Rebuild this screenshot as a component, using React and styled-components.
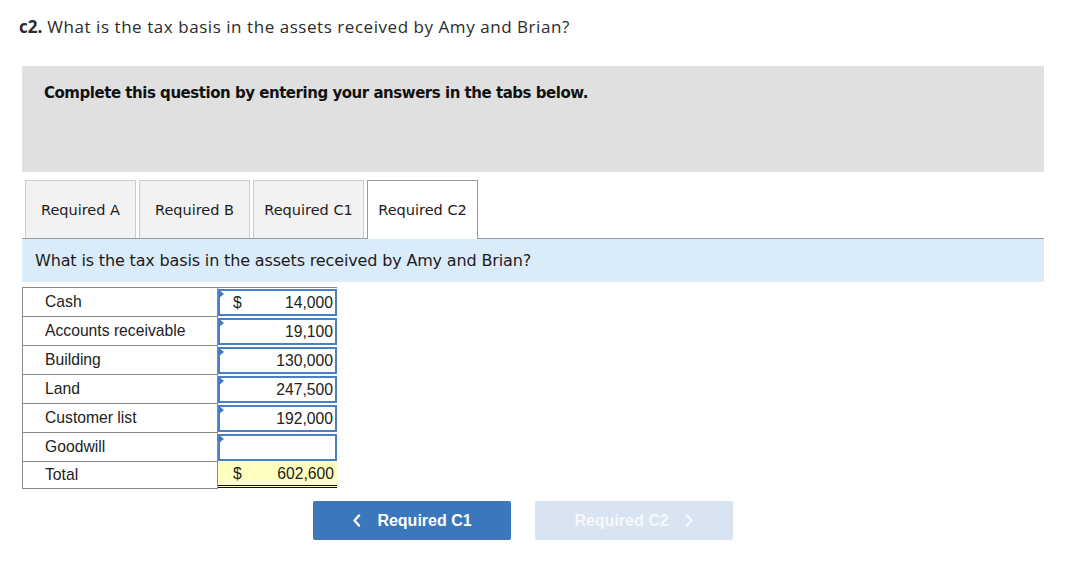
import React from "react";
import styled, { createGlobalStyle, css } from "styled-components";

const GlobalStyle = createGlobalStyle`
  html, body {
    margin: 0;
    padding: 0;
    background: #ffffff;
  }
`;

const Page = styled.div`
  width: 1078px;
  height: 574px;
  box-sizing: border-box;
  padding: 15px 34px 0 22px;
  font-family: "Liberation Sans", Arial, sans-serif;
  color: #222;
`;

const Heading = styled.h2`
  margin: 0 0 0 -3px;
  font-family: "Open Sans", Lato, sans-serif;
  font-weight: 400;
  font-size: 17px;
  letter-spacing: 0.55px;
  line-height: 24px;
  color: #2b2b2b;

  b {
    font-weight: 700;
    letter-spacing: 0;
  }
`;

const Instructions = styled.div`
  margin-top: 27px;
  height: 106px;
  box-sizing: border-box;
  background: #e0e0e0;
  padding: 18px 22px;
  font-family: Verdana, "DejaVu Sans", sans-serif;
  font-weight: 700;
  font-size: 15px;
  color: #111;
  letter-spacing: -0.47px;
`;

const TabBar = styled.div`
  margin-top: 8px;
  display: flex;
  gap: 3px;
  padding-left: 3px;
  border-bottom: 1px solid #9a9a9a;
  height: 58px;
  align-items: flex-end;
`;

const Tab = styled.div`
  width: 109px;
  height: 57px;
  display: flex;
  align-items: center;
  justify-content: center;
  font-family: Verdana, "DejaVu Sans", sans-serif;
  font-size: 14.5px;
  color: #1c1c1c;
  background: #f2f2f2;
  border: 1px solid #cccccc;
  border-bottom: none;
  box-sizing: content-box;

  ${(p) =>
    p.$active &&
    css`
      background: #ffffff;
      border-color: #9a9a9a;
      height: 58px;
      margin-bottom: -1px;
      position: relative;
    `}
`;

const QuestionBand = styled.div`
  height: 43px;
  background: #daebf9;
  display: flex;
  align-items: center;
  padding-left: 13px;
  font-family: Verdana, "DejaVu Sans", sans-serif;
  font-size: 16px;
  letter-spacing: -0.15px;
  color: #1c1c1c;
`;

const Table = styled.div`
  margin-top: 5px;
  width: 314px;
  display: grid;
  grid-template-columns: 195px 119px;
  border-top: 1px solid #8a8a8a;
  border-left: 1px solid #8a8a8a;
`;

const Label = styled.div`
  height: 28px;
  border-bottom: 1px solid #8a8a8a;
  border-right: 1px solid #8a8a8a;
  display: flex;
  align-items: center;
  padding-left: 22px;
  font-size: 15.7px;
  color: #222;
  ${(p) =>
    p.$total &&
    css`
      height: 26px;
    `}
`;

const ValueCell = styled.div`
  height: 29px;
  box-sizing: border-box;
  padding: 1px 0 0 0;
  display: flex;
  ${(p) =>
    p.$total &&
    css`
      background: #ffffc0;
      padding: 0;
      border-bottom: 3px double #111;
      height: 26px;
    `}
`;

const InputBox = styled.div`
  position: relative;
  flex: 1;
  height: 27px;
  box-sizing: border-box;
  border: 2px solid #4a7fc6;
  background: #ffffff;
  display: flex;
  align-items: center;
  padding: 0 2px 0 13px;
  font-size: 15.7px;
  color: #222;

  &::before {
    content: "";
    position: absolute;
    left: -1px;
    top: -1px;
    border-top: 4px solid transparent;
    border-bottom: 4px solid transparent;
    border-left: 5px solid #3f78c4;
  }
`;

const TotalBox = styled.div`
  flex: 1;
  display: flex;
  align-items: center;
  padding: 0 3px 0 15px;
  font-size: 15.7px;
  color: #222;
`;

const Dollar = styled.span``;
const Amount = styled.span`
  margin-left: auto;
`;

const Nav = styled.div`
  margin-top: 12px;
  display: flex;
  gap: 24px;
  padding-left: 291px;
`;

const NavButton = styled.button`
  width: 198px;
  height: 39px;
  border: none;
  border-radius: 2px;
  display: flex;
  align-items: center;
  justify-content: center;
  gap: 16px;
  font-family: "Liberation Sans", Arial, sans-serif;
  font-weight: 700;
  font-size: 16px;
  color: #ffffff;
  background: #3a77bc;
  cursor: pointer;

  ${(p) =>
    p.disabled &&
    css`
      background: #d8e4f1;
      color: #f5f8fc;
      cursor: default;
    `}
`;

const Chevron = ({ dir }) => (
  <svg width="9" height="13" viewBox="0 0 9 13" fill="none">
    <path
      d={dir === "left" ? "M7 1.5 L2.5 6.5 L7 11.5" : "M2 1.5 L6.5 6.5 L2 11.5"}
      stroke="currentColor"
      strokeWidth="2.4"
      strokeLinecap="round"
      strokeLinejoin="round"
    />
  </svg>
);

const rows = [
  { label: "Cash", dollar: true, value: "14,000" },
  { label: "Accounts receivable", value: "19,100" },
  { label: "Building", value: "130,000" },
  { label: "Land", value: "247,500" },
  { label: "Customer list", value: "192,000" },
  { label: "Goodwill", value: "" },
];

const tabs = ["Required A", "Required B", "Required C1", "Required C2"];

export default function App() {
  return (
    <>
      <GlobalStyle />
      <Page>
        <Heading>
          <b>c2.</b> What is the tax basis in the assets received by Amy and Brian?
        </Heading>
        <Instructions>Complete this question by entering your answers in the tabs below.</Instructions>
        <TabBar>
          {tabs.map((t) => (
            <Tab key={t} $active={t === "Required C2"}>
              {t}
            </Tab>
          ))}
        </TabBar>
        <QuestionBand>What is the tax basis in the assets received by Amy and Brian?</QuestionBand>
        <Table>
          {rows.map((r) => (
            <React.Fragment key={r.label}>
              <Label>{r.label}</Label>
              <ValueCell>
                <InputBox>
                  {r.dollar && <Dollar>$</Dollar>}
                  <Amount>{r.value}</Amount>
                </InputBox>
              </ValueCell>
            </React.Fragment>
          ))}
          <Label $total>Total</Label>
          <ValueCell $total>
            <TotalBox>
              <Dollar>$</Dollar>
              <Amount>602,600</Amount>
            </TotalBox>
          </ValueCell>
        </Table>
        <Nav>
          <NavButton>
            <Chevron dir="left" />
            Required C1
          </NavButton>
          <NavButton disabled>
            Required C2
            <Chevron dir="right" />
          </NavButton>
        </Nav>
      </Page>
    </>
  );
}
